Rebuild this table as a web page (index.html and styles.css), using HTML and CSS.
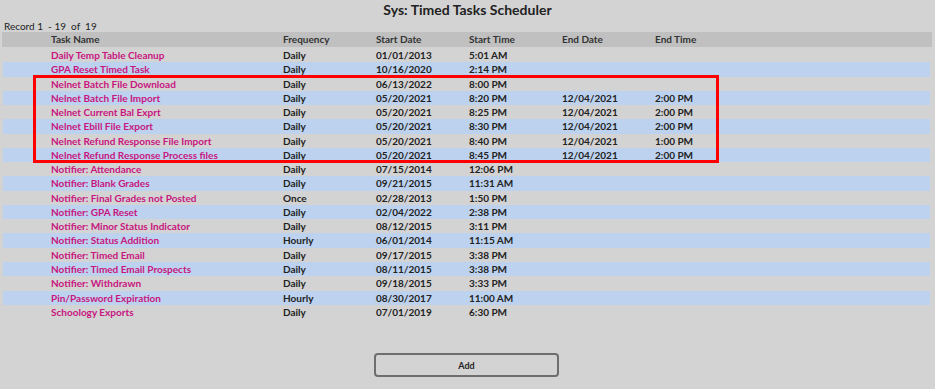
FILE: index.html
```html
<!DOCTYPE html>
<html>
<head>
<meta charset="utf-8">
<link rel="stylesheet" href="styles.css">
</head>
<body>
<div class="page">
  <h1 class="title">Sys: Timed Tasks Scheduler</h1>
  <div class="record">Record 1 &nbsp;- 19 &nbsp;of &nbsp;19</div>
  <div class="table">
    <div class="row head"><span>Task Name</span><span>Frequency</span><span>Start Date</span><span>Start Time</span><span>End Date</span><span>End Time</span></div>
    <div class="row"><span class="name">Daily Temp Table Cleanup</span><span>Daily</span><span>01/01/2013</span><span>5:01 AM</span><span></span><span></span></div>
    <div class="row alt"><span class="name">GPA Reset Timed Task</span><span>Daily</span><span>10/16/2020</span><span>2:14 PM</span><span></span><span></span></div>
    <div class="row"><span class="name">Nelnet Batch File Download</span><span>Daily</span><span>06/13/2022</span><span>8:00 PM</span><span></span><span></span></div>
    <div class="row alt"><span class="name">Nelnet Batch File Import</span><span>Daily</span><span>05/20/2021</span><span>8:20 PM</span><span>12/04/2021</span><span>2:00 PM</span></div>
    <div class="row"><span class="name">Nelnet Current Bal Exprt</span><span>Daily</span><span>05/20/2021</span><span>8:25 PM</span><span>12/04/2021</span><span>2:00 PM</span></div>
    <div class="row alt"><span class="name">Nelnet Ebill File Export</span><span>Daily</span><span>05/20/2021</span><span>8:30 PM</span><span>12/04/2021</span><span>2:00 PM</span></div>
    <div class="row"><span class="name">Nelnet Refund Response File Import</span><span>Daily</span><span>05/20/2021</span><span>8:40 PM</span><span>12/04/2021</span><span>1:00 PM</span></div>
    <div class="row alt"><span class="name">Nelnet Refund Response Process files</span><span>Daily</span><span>05/20/2021</span><span>8:45 PM</span><span>12/04/2021</span><span>2:00 PM</span></div>
    <div class="row"><span class="name">Notifier: Attendance</span><span>Daily</span><span>07/15/2014</span><span>12:06 PM</span><span></span><span></span></div>
    <div class="row alt"><span class="name">Notifier: Blank Grades</span><span>Daily</span><span>09/21/2015</span><span>11:31 AM</span><span></span><span></span></div>
    <div class="row"><span class="name">Notifier: Final Grades not Posted</span><span>Once</span><span>02/28/2013</span><span>1:50 PM</span><span></span><span></span></div>
    <div class="row alt"><span class="name">Notifier: GPA Reset</span><span>Daily</span><span>02/04/2022</span><span>2:38 PM</span><span></span><span></span></div>
    <div class="row"><span class="name">Notifier: Minor Status Indicator</span><span>Daily</span><span>08/12/2015</span><span>3:11 PM</span><span></span><span></span></div>
    <div class="row alt"><span class="name">Notifier: Status Addition</span><span>Hourly</span><span>06/01/2014</span><span>11:15 AM</span><span></span><span></span></div>
    <div class="row"><span class="name">Notifier: Timed Email</span><span>Daily</span><span>09/17/2015</span><span>3:38 PM</span><span></span><span></span></div>
    <div class="row alt"><span class="name">Notifier: Timed Email Prospects</span><span>Daily</span><span>08/11/2015</span><span>3:38 PM</span><span></span><span></span></div>
    <div class="row"><span class="name">Notifier: Withdrawn</span><span>Daily</span><span>09/18/2015</span><span>3:33 PM</span><span></span><span></span></div>
    <div class="row alt"><span class="name">Pin/Password Expiration</span><span>Hourly</span><span>08/30/2017</span><span>11:00 AM</span><span></span><span></span></div>
    <div class="row"><span class="name">Schoology Exports</span><span>Daily</span><span>07/01/2019</span><span>6:30 PM</span><span></span><span></span></div>
    <div class="highlight"></div>
  </div>
  <div class="actions"><button class="add">Add</button></div>
</div>
</body>
</html>
```
FILE: styles.css
```css
html, body {
  margin: 0;
  padding: 0;
  background: #d3d3d3;
}
body {
  font-family: "Lato", "DejaVu Sans", sans-serif;
  color: #222;
  width: 935px;
  height: 389px;
  overflow: hidden;
}
.page {
  display: flex;
  flex-direction: column;
}
.title {
  margin: 0;
  height: 18px;
  padding-top: 1px;
  font-size: 14px;
  line-height: 18px;
  font-weight: bold;
  text-align: center;
  color: #222;
}
.record {
  height: 13px;
  padding-top: 1px;
  margin-bottom: -1px;
  padding-left: 4px;
  font-size: 10px;
  line-height: 13px;
  color: #222;
}
.table {
  position: relative;
  display: flex;
  flex-direction: column;
}
.row {
  display: grid;
  grid-template-columns: 232px 93px 93px 93px 93px 1fr;
  margin-left: 3px;
  width: 927px;
  height: 14.28px;
  padding-left: 48px;
  box-sizing: border-box;
  font-size: 10px;
  font-weight: bold;
  line-height: 14.28px;
  color: #222;
  white-space: nowrap;
}
.row.head {
  margin-left: 2px;
  width: 930px;
  padding-left: 49px;
  height: 15px;
  line-height: 15px;
  background: #c0c0c0;
  color: #333;
  margin-bottom: 1px;
}
.row.alt {
  background: #bcd2ef;
}
.name {
  color: #c8157f;
}
.highlight {
  position: absolute;
  left: 33px;
  top: 43px;
  width: 680px;
  height: 82px;
  border: 3px solid #ff0000;
}
.actions {
  display: flex;
  justify-content: center;
  padding-top: 34px;
}
.add {
  width: 185px;
  height: 24px;
  margin-left: -2px;
  border: 2px solid #6e6e6e;
  border-radius: 4px;
  background: #d3d3d3;
  font-family: "Lato", sans-serif;
  font-size: 9px;
  font-weight: bold;
  color: #222;
  padding: 0;
}
```
